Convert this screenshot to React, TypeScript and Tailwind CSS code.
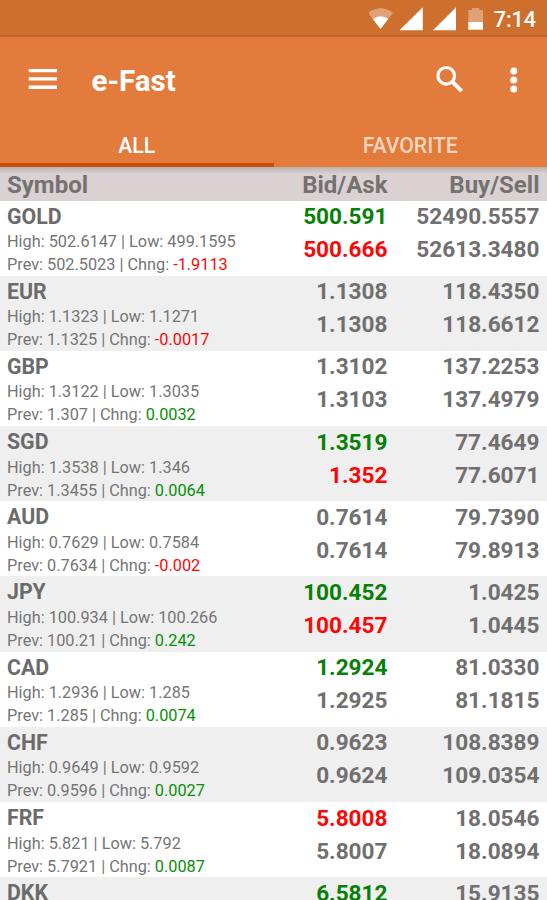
type Tone = "up" | "down" | "flat";

interface Quote {
  symbol: string;
  high?: string;
  low?: string;
  prev?: string;
  change?: string;
  bid: string;
  bidTone: Tone;
  ask?: string;
  askTone?: Tone;
  buy: string;
  sell?: string;
}

const quotes: Quote[] = [
  { symbol: "GOLD", high: "502.6147", low: "499.1595", prev: "502.5023", change: "-1.9113", bid: "500.591", bidTone: "up", ask: "500.666", askTone: "down", buy: "52490.5557", sell: "52613.3480" },
  { symbol: "EUR", high: "1.1323", low: "1.1271", prev: "1.1325", change: "-0.0017", bid: "1.1308", bidTone: "flat", ask: "1.1308", askTone: "flat", buy: "118.4350", sell: "118.6612" },
  { symbol: "GBP", high: "1.3122", low: "1.3035", prev: "1.307", change: "0.0032", bid: "1.3102", bidTone: "flat", ask: "1.3103", askTone: "flat", buy: "137.2253", sell: "137.4979" },
  { symbol: "SGD", high: "1.3538", low: "1.346", prev: "1.3455", change: "0.0064", bid: "1.3519", bidTone: "up", ask: "1.352", askTone: "down", buy: "77.4649", sell: "77.6071" },
  { symbol: "AUD", high: "0.7629", low: "0.7584", prev: "0.7634", change: "-0.002", bid: "0.7614", bidTone: "flat", ask: "0.7614", askTone: "flat", buy: "79.7390", sell: "79.8913" },
  { symbol: "JPY", high: "100.934", low: "100.266", prev: "100.21", change: "0.242", bid: "100.452", bidTone: "up", ask: "100.457", askTone: "down", buy: "1.0425", sell: "1.0445" },
  { symbol: "CAD", high: "1.2936", low: "1.285", prev: "1.285", change: "0.0074", bid: "1.2924", bidTone: "up", ask: "1.2925", askTone: "flat", buy: "81.0330", sell: "81.1815" },
  { symbol: "CHF", high: "0.9649", low: "0.9592", prev: "0.9596", change: "0.0027", bid: "0.9623", bidTone: "flat", ask: "0.9624", askTone: "flat", buy: "108.8389", sell: "109.0354" },
  { symbol: "FRF", high: "5.821", low: "5.792", prev: "5.7921", change: "0.0087", bid: "5.8008", bidTone: "down", ask: "5.8007", askTone: "flat", buy: "18.0546", sell: "18.0894" },
  { symbol: "DKK", bid: "6.5812", bidTone: "up", buy: "15.9135" },
];

const toneClass: Record<Tone, string> = {
  up: "text-[#078007]",
  down: "text-[#fa0808]",
  flat: "text-[#707070]",
};

function StatusBar() {
  return (
    <div className="flex h-[37px] shrink-0 items-start justify-end border-b-2 border-[#bd652d] bg-[#cf6f2e] pr-[11px] text-white">
      <svg width="118" height="37" viewBox="0 0 118 37" fill="currentColor" className="shrink-0">
        <path d="M-1 12.8Q11.500 3.500 24 12.800L11.500 29Z" opacity=".35" />
        <path d="M3.800 19Q11.500 13.400 19.200 19L11.500 29Z" />
        <path d="M30.500 30.300L53.800 7.300V30.300Z" />
        <path d="M64 30.300L87 7.300V30.300Z" />
        <path d="M99.300 10H103V8H110.500V10H114V22H99.300Z" opacity=".35" />
        <path d="M99.300 22H114V29.700H99.300Z" />
      </svg>
      <span className="ml-[7px] mt-[7px] text-[21.5px] leading-[26px] font-medium">7:14</span>
    </div>
  );
}

function Toolbar() {
  return (
    <div className="flex h-[87px] shrink-0 items-center pl-[28px] pr-[29px] text-white">
      <svg width="30" height="22" viewBox="0 0 30 22" fill="currentColor" className="mt-[-3px]">
        <path d="M.7 1H29V4.300H.7ZM.7 9.300H29V12.600H.7ZM.7 17.600H29V20.900H.7Z" />
      </svg>
      <h1 className="ml-[33.5px] mt-[1px] text-[29.5px] leading-[36px] font-bold">e-Fast</h1>
      <svg width="28" height="28" viewBox="0 0 28 28" fill="none" stroke="currentColor" className="ml-auto mt-[-3px]">
        <circle cx="10.200" cy="10.800" r="8.300" strokeWidth="3.200" />
        <path d="M16 16.500L25.700 26.200" strokeWidth="4" />
      </svg>
      <svg width="8" height="28" viewBox="0 0 8 28" fill="currentColor" className="ml-[46px] mt-[-2px]">
        <circle cx="3.700" cy="5" r="3.500" />
        <circle cx="3.700" cy="14" r="3.500" />
        <circle cx="3.700" cy="23" r="3.500" />
      </svg>
    </div>
  );
}

function Tabs() {
  return (
    <div className="grid h-[43px] shrink-0 grid-cols-2 grid-rows-[43px] text-center text-[21.2px] leading-[44px] font-medium">
      <div className="h-[43px] border-b-4 border-[#c84c05] text-white">ALL</div>
      <div className="text-[#fbd5bd]">FAVORITE</div>
    </div>
  );
}

function QuoteRow({ quote, shaded }: { quote: Quote; shaded: boolean }) {
  const changeColor = quote.change?.startsWith("-") ? "text-[#fa0808]" : "text-[#078f07]";
  return (
    <div className={`flex h-[75.2px] shrink-0 pl-[7px] pr-[7.5px] ${shaded ? "bg-[#efefef]" : "bg-white"}`}>
      <div className="flex-1 whitespace-nowrap">
        <div className="mt-[2px] h-[27.6px] text-[21.3px] leading-[28px] font-bold text-[#6b6b6b]">{quote.symbol}</div>
        {quote.high && (
          <div className="text-[16.3px] leading-[23px] text-[#757575]">
            <div>High: {quote.high} | Low: {quote.low}</div>
            <div>
              Prev: {quote.prev} | Chng: <span className={changeColor}>{quote.change}</span>
            </div>
          </div>
        )}
      </div>
      <div className="-mt-[0.4px] text-right text-[22.6px] leading-[33px] font-bold">
        <div className={toneClass[quote.bidTone]}>{quote.bid}</div>
        {quote.ask && <div className={toneClass[quote.askTone ?? "flat"]}>{quote.ask}</div>}
      </div>
      <div className="-mt-[0.4px] w-[152px] text-right text-[22.6px] leading-[33px] font-bold text-[#707070]">
        <div>{quote.buy}</div>
        {quote.sell && <div>{quote.sell}</div>}
      </div>
    </div>
  );
}

export default function App() {
  return (
    <div className="flex h-[900px] w-[547px] flex-col overflow-hidden bg-white font-['Roboto',sans-serif]">
      <header className="flex shrink-0 flex-col bg-[#e27b3b]">
        <StatusBar />
        <Toolbar />
        <Tabs />
      </header>
      <div className="flex h-[33.5px] shrink-0 bg-linear-to-b from-[#bdb2b1] to-[#d9d1d2] to-20% pl-[7px] pr-[7.5px] text-[24px] leading-[36px] font-bold text-[#757171]">
        <div className="flex-1">Symbol</div>
        <div>Bid/Ask</div>
        <div className="w-[152px] text-right">Buy/Sell</div>
      </div>
      <main className="flex flex-col">
        {quotes.map((quote, index) => (
          <QuoteRow key={quote.symbol} quote={quote} shaded={index % 2 === 1} />
        ))}
      </main>
    </div>
  );
}
